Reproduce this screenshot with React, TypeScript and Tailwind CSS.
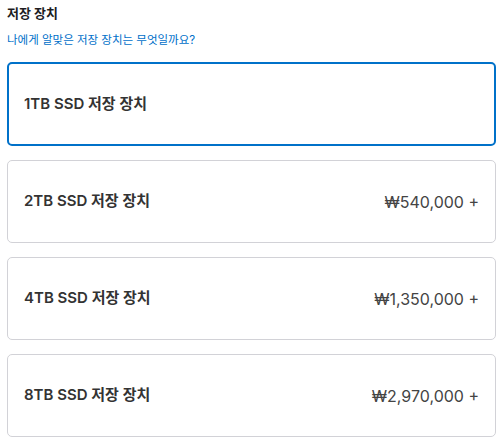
const options = [
  { label: "1TB SSD 저장 장치", price: "", selected: true },
  { label: "2TB SSD 저장 장치", price: "₩540,000 +" },
  { label: "4TB SSD 저장 장치", price: "₩1,350,000 +" },
  { label: "8TB SSD 저장 장치", price: "₩2,970,000 +" },
];

export default function App() {
  return (
    <div className="w-[503px] h-[443px] bg-white px-[7px] pt-[3px] font-['Inter','Noto_Sans_CJK_KR',sans-serif] text-[#1d1d1f]">
      <h2 className="text-[13px] font-bold leading-[20px]">저장 장치</h2>
      <a className="block mt-[10px] text-[11.5px] leading-[14px] text-[#0070c9]">
        나에게 알맞은 저장 장치는 무엇일까요?
      </a>
      <div className="mt-[15px] flex flex-col gap-[14px]">
        {options.map((o) => (
          <div
            key={o.label}
            className={
              o.selected
                ? "h-[84px] rounded-[5px] border-2 border-[#0071c9] flex items-center justify-between pl-[15px] pr-[15px]"
                : "h-[83px] rounded-[5px] border border-[#d2d2d7] flex items-center justify-between pl-[16px] pr-[16px]"
            }
          >
            <span className="text-[15px] font-semibold text-[#333]">{o.label}</span>
            <span className="text-[16px] font-normal text-[#444]">{o.price}</span>
          </div>
        ))}
      </div>
    </div>
  );
}
